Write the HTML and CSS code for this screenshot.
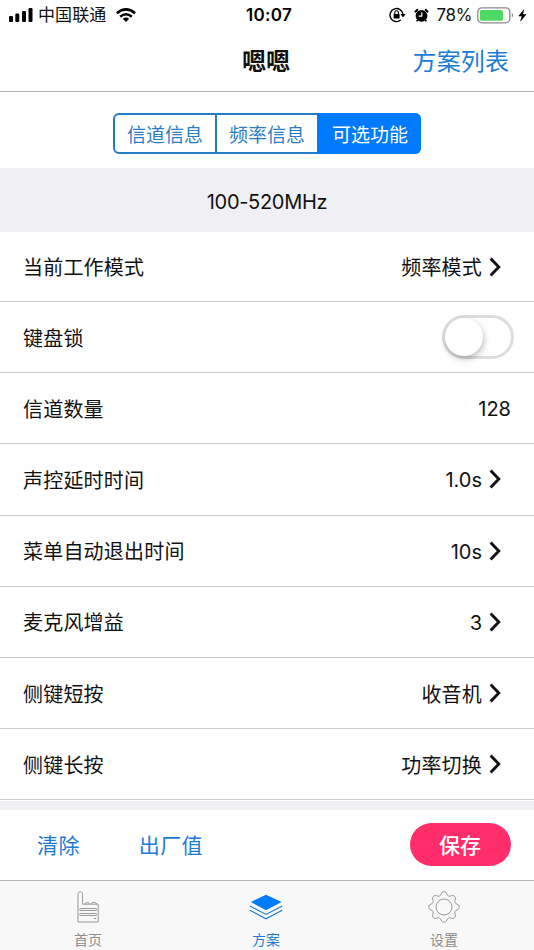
FILE: index.html
```html
<!DOCTYPE html>
<html lang="zh-CN">
<head>
<meta charset="utf-8">
<title>可选功能</title>
<link rel="stylesheet" href="styles.css">
</head>
<body>
<div class="app">
  <header class="status">
    <div class="status-left">
      <svg width="25" height="16" viewBox="0 0 25 16"><rect x="0" y="9" width="4" height="6" rx="1.3"/><rect x="6.3" y="6.5" width="4" height="8.5" rx="1.3"/><rect x="13" y="4" width="4" height="11" rx="1.3"/><rect x="19.5" y="1" width="4" height="14" rx="1.3"/></svg>
      <span class="carrier">中国联通</span>
      <svg class="wifi" width="20" height="14" viewBox="0 0 20 14"><g fill="none" stroke="#000" stroke-width="2.6"><path d="M.9 5.2Q10-2.4 19.1 5.2"/><path d="M4.2 8.7Q10 3.8 15.8 8.7"/></g><path d="M6.8 10.7Q10 8.2 13.2 10.7L10 14z"/></svg>
    </div>
    <span class="time">10:07</span>
    <div class="status-right">
      <svg width="17" height="16" viewBox="0 0 17 16"><path d="M11.8 13A6.5 6.5 0 1 1 14 7.2" fill="none" stroke="#000" stroke-width="1.4"/><path d="M11.4 7h5.2L14 10.6z"/><rect x="4.6" y="7" width="6" height="4.4" rx=".5"/><path d="M5.8 7V5.6a1.8 1.8 0 0 1 3.6 0V7" fill="none" stroke="#000" stroke-width="1.1"/></svg>
      <svg class="alarm" width="15" height="15" viewBox="0 0 15 15"><circle cx="7.5" cy="7.8" r="5.9"/><path d="M.9 4.3 3.9 1.3M14.1 4.3 11.1 1.3" stroke="#000" stroke-width="2"/><path d="m3.6 12-1 1.4M11.4 12l1 1.4" stroke="#000" stroke-width="1.5"/><path d="M7.8 4.4v3.8H4.7" fill="none" stroke="#fff" stroke-width="1.2"/></svg>
      <span class="percent">78%</span>
      <svg class="battery" width="38" height="17" viewBox="0 0 38 17"><rect x=".8" y=".8" width="32" height="15" rx="4" fill="#fff" stroke="#8b8b8b" stroke-width="1.3"/><rect x="2.9" y="3" width="23" height="10.7" rx="1.5" fill="#4cd964"/><path d="M34.8 5.8q2.5 2.5 0 5z" fill="#8b8b8b"/></svg>
      <svg width="9" height="13" viewBox="0 0 9 13"><path d="M6.2 0 .2 7.3h3.5L2 13l6.5-7.7H5z"/></svg>
    </div>
  </header>
  <nav class="navbar"><span></span><h1>嗯嗯</h1><a class="plan-list">方案列表</a></nav>
  <div class="segments"><div class="control"><a>信道信息</a><a>频率信息</a><a class="selected">可选功能</a></div></div>
  <div class="band">100-520MHz</div>
  <main class="rows">
    <div class="row"><span>当前工作模式</span><span class="value">频率模式<svg class="chevron" viewBox="0 0 12 20"><path d="m1.6 1.4 8.2 8.6-8.2 8.6"/></svg></span></div>
    <div class="row"><span>键盘锁</span><span class="switch"><i></i></span></div>
    <div class="row"><span>信道数量</span><span class="value plain"><span class="latin">128</span></span></div>
    <div class="row"><span>声控延时时间</span><span class="value"><span class="latin">1.0s</span><svg class="chevron" viewBox="0 0 12 20"><path d="m1.6 1.4 8.2 8.6-8.2 8.6"/></svg></span></div>
    <div class="row"><span>菜单自动退出时间</span><span class="value"><span class="latin">10s</span><svg class="chevron" viewBox="0 0 12 20"><path d="m1.6 1.4 8.2 8.6-8.2 8.6"/></svg></span></div>
    <div class="row"><span>麦克风增益</span><span class="value"><span class="latin">3</span><svg class="chevron" viewBox="0 0 12 20"><path d="m1.6 1.4 8.2 8.6-8.2 8.6"/></svg></span></div>
    <div class="row"><span>侧键短按</span><span class="value">收音机<svg class="chevron" viewBox="0 0 12 20"><path d="m1.6 1.4 8.2 8.6-8.2 8.6"/></svg></span></div>
    <div class="row"><span>侧键长按</span><span class="value">功率切换<svg class="chevron" viewBox="0 0 12 20"><path d="m1.6 1.4 8.2 8.6-8.2 8.6"/></svg></span></div>
  </main>
  <div class="gap"></div>
  <div class="actions"><a>清除</a><a class="factory">出厂值</a><button class="save">保存</button></div>
  <footer class="tabs">
    <a class="tab"><svg width="34" height="34" viewBox="0 0 34 34" fill="none" stroke="#999" stroke-width="1"><path d="M7 32V4.4Q7 1.6 9.3 1.6T11.6 4.4V14.2H27.2V32z"/><path d="M14 14Q14.3 12.6 16.3 12.6T18.6 14M20.5 14Q20.8 12.2 23 12.2T25.6 14"/><rect x="8.8" y="18.5" width="16.6" height="2" rx=".6"/><rect x="8.8" y="23.5" width="16.6" height="2" rx=".6"/><path d="M23 28.5h2"/></svg><span>首页</span></a>
    <a class="tab active"><svg width="34" height="34" viewBox="0 0 34 34"><path d="M17 4.8 32.6 12 17 20.2 1.8 12z" fill="#007aff"/><path d="m.8 16 16.2 8.4L33.2 16M.8 20.2 17 28.8l16.2-8.6" fill="none" stroke="#1879dc" stroke-width="1.1"/></svg><span>方案</span></a>
    <a class="tab"><svg width="34" height="34" viewBox="-17 -17 34 34" fill="none" stroke="#999" stroke-width="1"><path d="M13.1-2.8A2.9 2.9 0 0 1 13.1 2.8A3 3 0 0 0 11.2 7.3A2.9 2.9 0 0 1 7.3 11.2A3 3 0 0 0 2.8 13.1A2.9 2.9 0 0 1-2.8 13.1A3 3 0 0 0-7.3 11.2A2.9 2.9 0 0 1-11.2 7.3A3 3 0 0 0-13.1 2.8A2.9 2.9 0 0 1-13.1-2.8A3 3 0 0 0-11.2-7.3A2.9 2.9 0 0 1-7.3-11.2A3 3 0 0 0-2.8-13.1A2.9 2.9 0 0 1 2.8-13.1A3 3 0 0 0 7.3-11.2A2.9 2.9 0 0 1 11.2-7.3A3 3 0 0 0 13.1-2.8z"/><circle r="8"/></svg><span>设置</span></a>
  </footer>
</div>
</body>
</html>
```
FILE: styles.css
```css
* { box-sizing: border-box; }
body { margin: 0; background: #fff; }
.app {
  width: 534px; height: 950px; overflow: hidden;
  display: flex; flex-direction: column;
  font-family: Inter, "Noto Sans CJK SC", sans-serif;
  color: #111; font-size: 20px; letter-spacing: .2px;
}
svg { display: block; flex: none; }
.status { height: 30px; display: grid; grid-template-columns: 1fr auto 1fr; align-items: center; padding: 0 7px 0 9px; flex: none; }
.status-left, .status-right { display: flex; align-items: center; }
.status-right { justify-content: flex-end; }
.carrier { font-size: 17px; line-height: 24px; margin-left: 4px; letter-spacing: .1px; }
.wifi { margin-left: 10px; }
.time { font-size: 17px; font-weight: 600; letter-spacing: .3px; color: #000; padding-left: 2px; }
.alarm { margin-left: 8px; }
.percent { font-size: 17px; margin: 0 5px 0 8px; letter-spacing: -.4px; }
.battery { margin-right: 3px; }
.navbar { height: 62px; flex: none; display: grid; grid-template-columns: 1fr auto 1fr; align-items: center; border-bottom: 1px solid #b2b2b2; padding: 0 25px 3px 23px; }
h1 { margin: 0; font-size: 24px; font-weight: 600; letter-spacing: 0; }
.plan-list { justify-self: end; font-size: 24px; color: #1b7cd8; letter-spacing: .1px; }
.segments { height: 76px; flex: none; display: flex; justify-content: center; align-items: flex-start; padding-top: 21px; }
.control { width: 308px; height: 41px; border: 2px solid #237cc8; border-radius: 6px; display: grid; grid-template-columns: 100px 102px 1fr; font-size: 19px; letter-spacing: 0; color: #2b7dc4; }
.control a { display: flex; align-items: center; justify-content: center; padding-bottom: 1px; }
.control a + a { border-left: 2px solid #237cc8; }
.control .selected { margin: -2px -2px -2px 0; border-color: #007aff; border-radius: 0 6px 6px 0; color: #fff; background: #007aff; }
.band { height: 64px; flex: none; background: #efeff4; display: flex; align-items: center; justify-content: center; padding-top: 3px; letter-spacing: -.3px; }
.rows { height: 568.5px; flex: none; display: grid; grid-template-rows: 70px repeat(7, 71.2px); }
.row { display: flex; align-items: center; justify-content: space-between; padding: 0 20px 0 23px; border-bottom: 1px solid #ccc; }
.value { display: flex; align-items: center; margin-right: 13px; }
.latin { padding-top: 2px; letter-spacing: 0; }
.plain { margin-right: 3px; }
.chevron { width: 12px; height: 20px; margin-left: 7px; fill: none; stroke: #111; stroke-width: 2.9; }
.switch { width: 72px; height: 44px; border: 3px solid #dedede; border-radius: 22px; }
.switch i { display: block; width: 38px; height: 38px; border-radius: 50%; background: #fff; box-shadow: 1px 3px 6px rgba(0,0,0,.25); }
.gap { height: 9px; flex: none; background: #efeff4; }
.actions { height: 70px; flex: none; display: flex; align-items: center; padding: 0 23px 0 37px; color: #1b7cd8; font-size: 21px; letter-spacing: .4px; }
.actions a { padding-bottom: 2px; }
.factory { margin-left: 59px; }
.save { margin-left: auto; width: 101px; height: 43px; padding: 0 1px 2px 0; border: 0; border-radius: 22px; background: #ff2d69; color: #fff; font: 500 21px Inter, "Noto Sans CJK SC", sans-serif; }
.tabs { flex: 1; display: grid; grid-template-columns: repeat(3, 1fr); background: #f8f8f8; border-top: 1px solid #b5b5b5; }
.tab { display: flex; flex-direction: column; align-items: center; padding: 9px 2px 0 0; font-size: 14px; line-height: 20px; letter-spacing: 0; color: #8c8c8c; }
.tab span { margin-top: 6px; }
.active { color: #1b7cd8; }
```
